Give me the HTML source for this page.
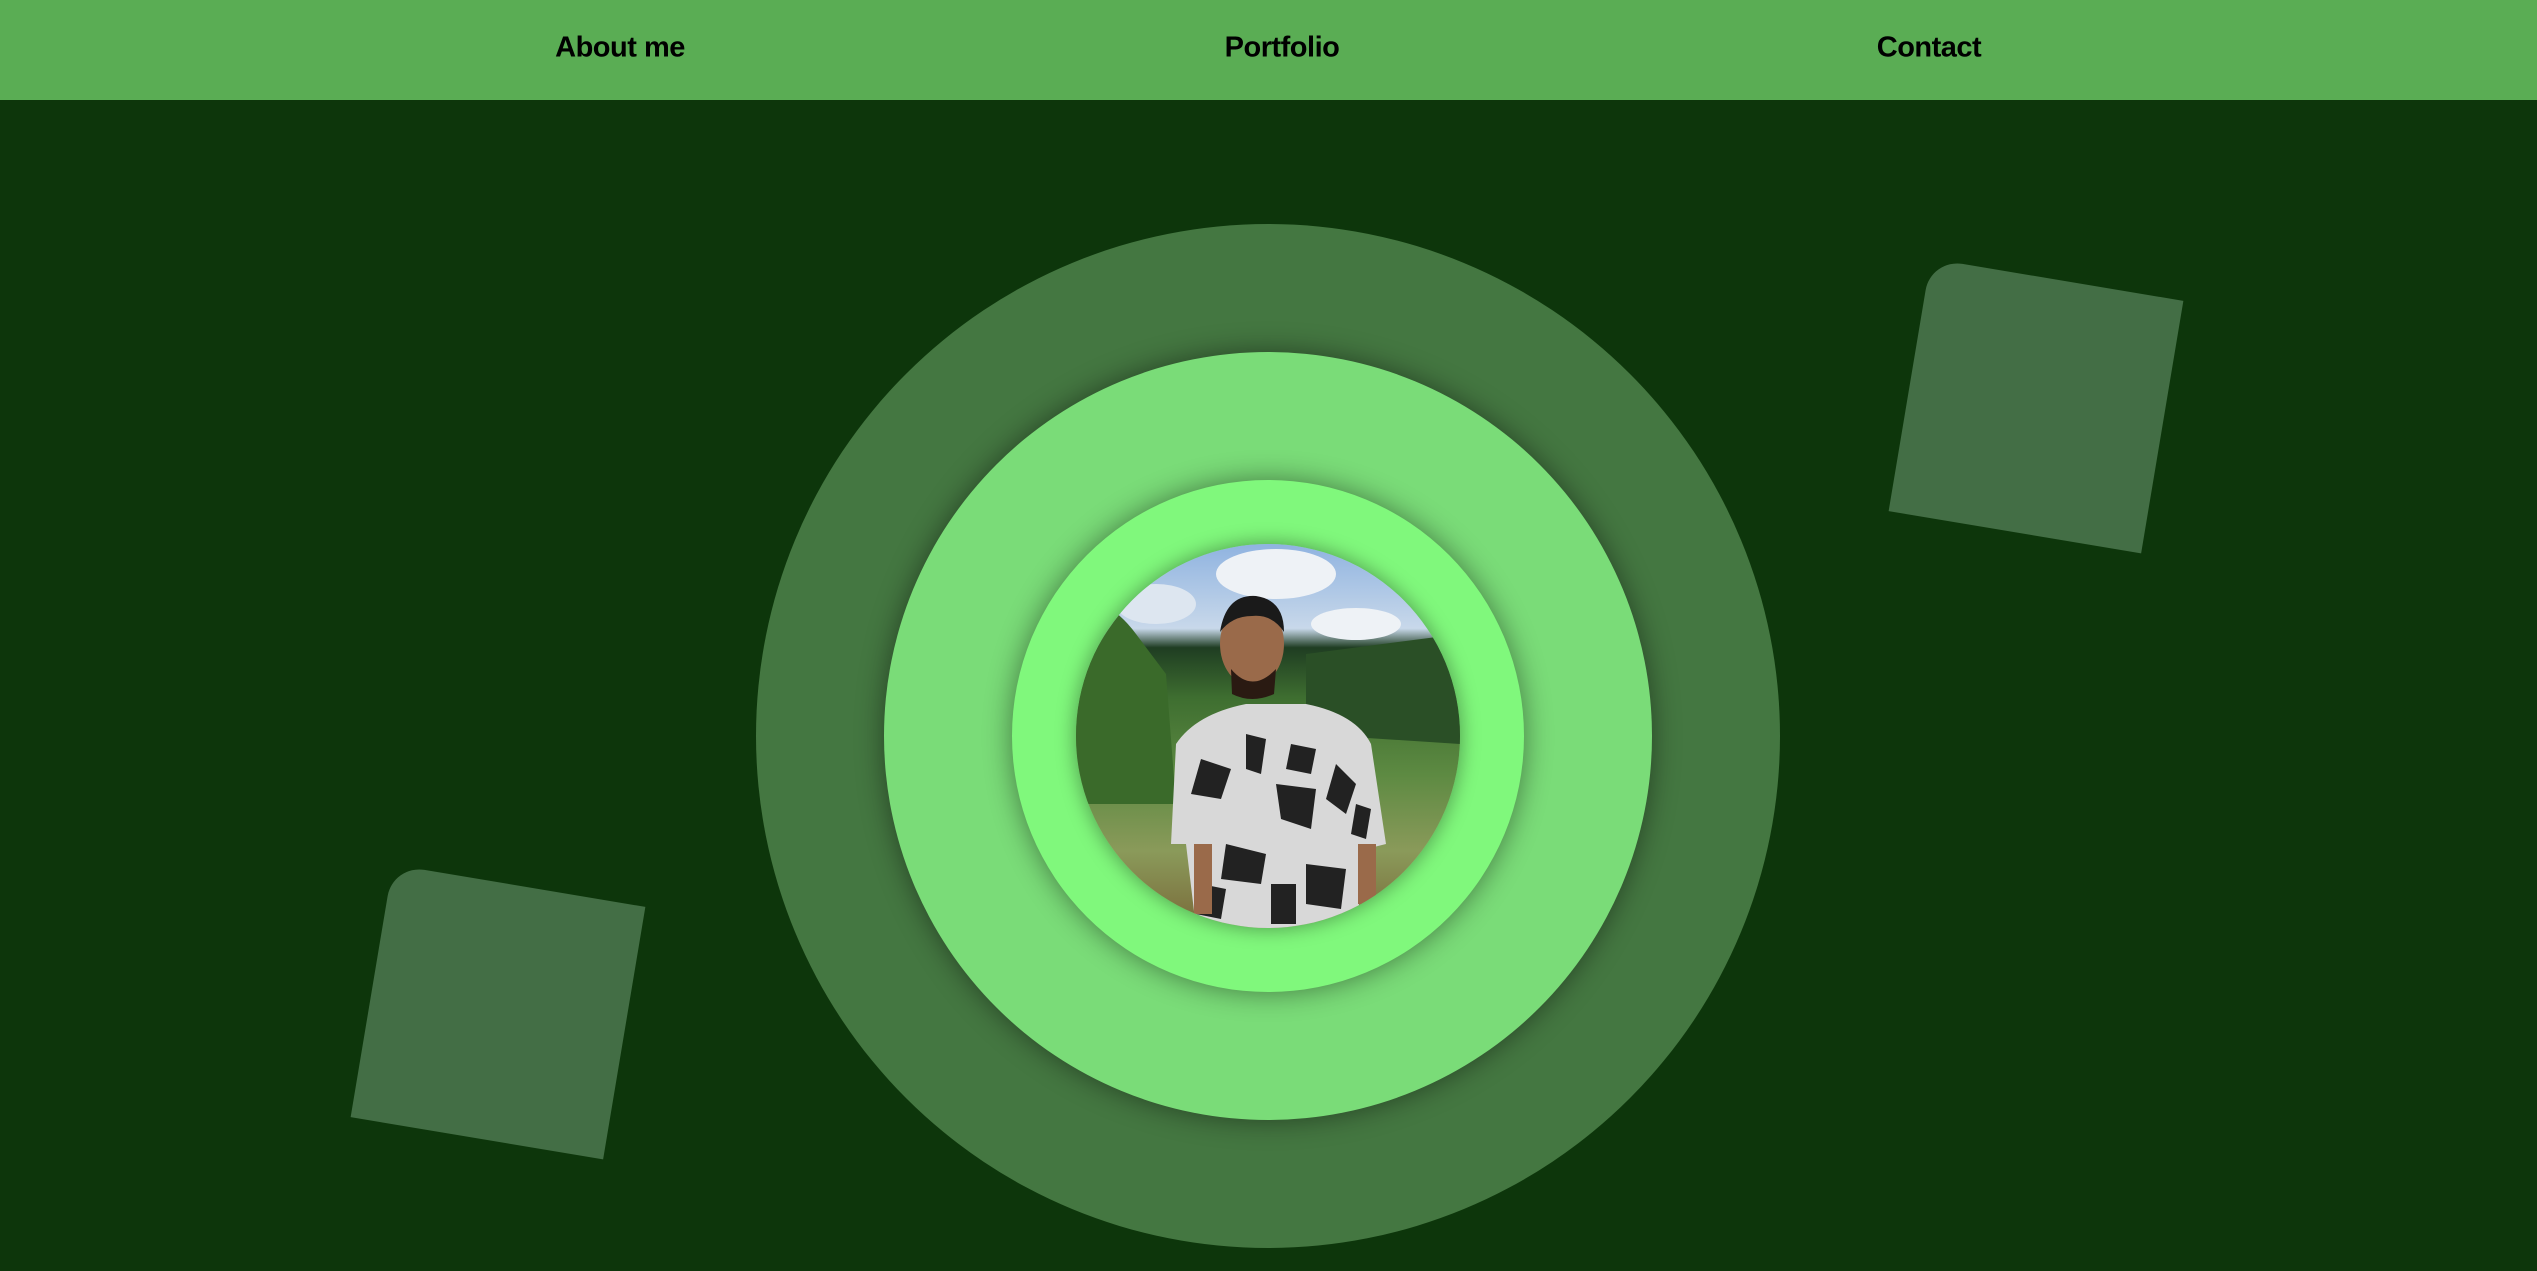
<!DOCTYPE html>
<html><head><meta charset="utf-8"><style>
html,body{margin:0;padding:0;width:2537px;height:1271px;overflow:hidden;background:#0d360b;font-family:"Liberation Sans",sans-serif}
nav{position:absolute;left:0;top:0;width:2537px;height:100px;background:#5aad54}
nav span{position:absolute;top:48px;transform:translate(-50%,-50%);font-weight:bold;font-size:29px;color:#000;letter-spacing:-0.5px}
.c{position:absolute;border-radius:50%;transform:translate(-50%,-50%);left:1268px;top:736px}
.sq{position:absolute;width:256px;height:256px;background:#436e45;border-top-left-radius:32px;transform:translate(-50%,-50%) rotate(9.5deg)}
</style></head><body>
<nav><span style="left:620px">About me</span><span style="left:1282px">Portfolio</span><span style="left:1929px">Contact</span></nav>
<div class="sq" style="left:2036px;top:406px"></div>
<div class="sq" style="left:498px;top:1012px"></div>
<div class="c" style="width:1024px;height:1024px;background:#447741"></div>
<div class="c" style="width:768px;height:768px;background:#7adc78;box-shadow:0 0 28px rgba(0,0,0,.45)"></div>
<div class="c" style="width:512px;height:512px;background:#80f87c;box-shadow:0 0 28px rgba(0,0,0,.45)"></div>
<div class="c" style="width:384px;height:384px;overflow:hidden;box-shadow:0 0 20px rgba(0,0,0,.4)">
<svg width="384" height="384" viewBox="0 0 384 384">
<defs><linearGradient id="g" x1="0" y1="0" x2="0" y2="1"><stop offset="0" stop-color="#8fb3e0"/><stop offset=".22" stop-color="#c8d8ea"/><stop offset=".27" stop-color="#1f3d22"/><stop offset=".4" stop-color="#3e6e30"/><stop offset=".6" stop-color="#5d8a42"/><stop offset=".8" stop-color="#8a9a5a"/><stop offset="1" stop-color="#7a6a3a"/></linearGradient></defs>
<rect width="384" height="384" fill="url(#g)"/>
<ellipse cx="200" cy="30" rx="60" ry="25" fill="#eef2f6"/>
<ellipse cx="280" cy="80" rx="45" ry="16" fill="#eef2f6"/>
<ellipse cx="80" cy="60" rx="40" ry="20" fill="#dde6f0"/>
<path d="M0 60 Q30 50 60 90 L90 130 L100 260 L0 260Z" fill="#3a6a2a"/>
<path d="M230 110 L384 90 L384 200 L230 190Z" fill="#2a4f26"/>
<path d="M100 200 Q120 170 170 160 L230 160 Q280 170 295 200 L310 300 L290 305 L280 384 L120 384 L110 300 L95 300 Z" fill="#d8d8d8"/>
<path d="M125 215 l30 10 -10 30 -30 -5z M200 240 l40 5 -5 40 -30 -10z M150 300 l40 10 -5 30 -40-5z M230 320 l40 5 -5 40 -35-5z M260 220 l20 20 -10 30 -20-15z M170 190 l20 5 -5 35 -15-5z M215 200 l25 5 -5 25 -25-5z M125 340 l25 5 -5 30 -25-5z M195 340 l25 0 0 40 -25 0z M280 260 l15 5 -5 30 -15-5z" fill="#222"/>
<ellipse cx="176" cy="100" rx="32" ry="42" fill="#9a6a4a"/>
<path d="M144 88 Q150 50 180 52 Q208 56 208 88 Q196 70 176 72 Q156 72 144 88z" fill="#1a1a1a"/>
<path d="M155 125 Q176 150 200 125 L198 150 Q176 160 156 150Z" fill="#2a1a12"/>
<rect x="118" y="300" width="18" height="70" fill="#9a6a4a"/><rect x="282" y="300" width="18" height="60" fill="#9a6a4a"/>
</svg></div>
</body></html>
